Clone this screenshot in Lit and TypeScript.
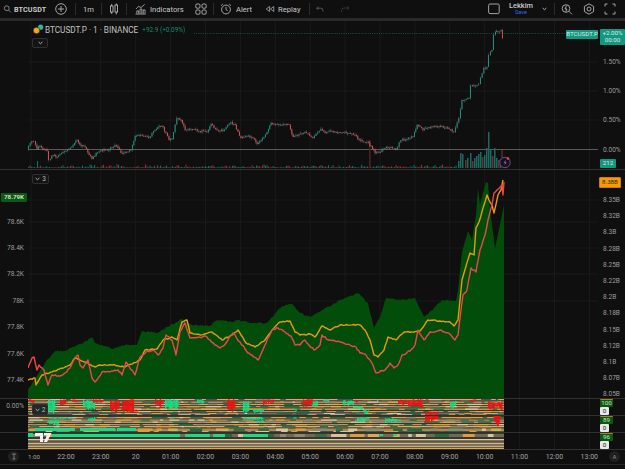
import { LitElement, css, html, svg } from "lit";
import { customElement } from "lit/decorators.js";

type Pt = [number, number];

const rng = (seed: number) => () => {
  seed = (seed * 1664525 + 1013904223) >>> 0;
  return seed / 4294967296;
};

const PRICE: Pt[] = [
  [28,149],[33,141],[35,141],[38,149],[41,146],[45,149],[48,151],[50,160],[54,155],[58,157],[64,152],[70,149],[74,145],[78,140],[82,146],[86,147],[90,155],[93,159],[97,153],[102,150],[110,150],[116,145],[119,148],[122,153],[126,152],[132,150],[136,136],[140,135],[145,136],[150,138],[156,130],[160,126],[164,127],[170,140],[173,139],[178,118],[182,120],[186,130],[192,129],[200,131],[208,132],[212,124],[218,130],[224,131],[232,122],[236,125],[242,138],[248,136],[254,138],[258,144],[262,140],[268,132],[272,123],[280,125],[290,125],[294,137],[300,134],[306,132],[314,138],[322,129],[326,133],[330,131],[340,132],[350,133],[356,135],[360,140],[368,142],[372,146],[376,153],[380,152],[386,148],[392,147],[397,150],[402,140],[408,139],[414,137],[418,125],[424,130],[430,127],[440,126],[450,129],[455,132],[460,118],[463,100],[470,98],[472,85],[478,85],[480,84],[485,68],[488,67],[490,55],[493,50],[495,35],[496,32],[502,30],[503,38],
];

const AREA: Pt[] = [
  [28,390],[45,363],[55,351],[65,351],[70,348],[83,343],[92,337],[95,343],[113,349],[125,345],[137,345],[142,331],[157,333],[167,327],[182,319],[192,325],[210,326],[217,320],[233,322],[238,320],[250,323],[267,323],[282,306],[292,304],[300,313],[310,317],[322,310],[332,305],[340,300],[358,293],[368,303],[374,328],[380,317],[386,298],[400,300],[415,298],[424,317],[434,308],[442,300],[456,301],[458,290],[462,252],[468,231],[472,240],[476,215],[478,188],[480,205],[486,182],[488,183],[490,210],[495,248],[502,215],[504,205],
];

const ORANGE: Pt[] = [
  [28,380],[35,378],[36,385],[42,375],[55,371],[65,367],[70,365],[75,358],[85,362],[95,367],[100,365],[115,365],[125,367],[140,360],[145,350],[157,349],[163,340],[172,337],[177,340],[182,322],[187,320],[190,333],[200,335],[212,332],[222,340],[232,335],[238,330],[246,343],[255,347],[265,340],[272,330],[280,322],[290,321],[295,332],[300,335],[310,334],[315,337],[322,326],[330,330],[340,325],[360,325],[365,330],[370,340],[374,355],[378,357],[384,350],[388,337],[396,340],[404,332],[414,332],[420,331],[428,320],[440,321],[450,322],[454,326],[458,320],[460,300],[462,280],[464,273],[470,253],[474,255],[476,228],[479,222],[484,205],[487,195],[489,200],[492,205],[494,213],[498,195],[501,190],[503,180],
];

const RED: Pt[] = [
  [28,368],[32,358],[34,357],[37,370],[39,365],[44,370],[48,385],[52,375],[60,376],[65,373],[70,368],[75,358],[78,355],[80,365],[83,368],[88,360],[92,378],[95,382],[102,372],[110,372],[118,370],[122,375],[126,362],[135,375],[140,357],[146,352],[153,350],[158,355],[163,348],[166,335],[172,340],[176,355],[180,332],[185,323],[190,338],[195,338],[205,336],[210,340],[215,345],[220,348],[226,343],[233,333],[240,342],[248,353],[252,355],[258,360],[265,345],[272,330],[278,328],[285,332],[291,336],[295,345],[300,345],[305,340],[314,350],[320,345],[322,335],[328,340],[340,342],[350,345],[356,347],[360,353],[366,355],[370,360],[373,365],[376,373],[385,370],[390,363],[394,368],[398,365],[402,355],[410,351],[415,345],[418,330],[424,340],[428,335],[430,332],[435,332],[440,330],[450,334],[455,340],[458,335],[461,310],[463,295],[467,290],[471,268],[476,272],[480,250],[485,235],[488,220],[492,205],[494,193],[497,190],[502,185],[503,195],[504,182],
];

// [x1, x2, y1, y2] in page pixels
const RED_BLOBS = [
  [29,35,398,402],[60,65,398,405],[72,77,398,401],[93,103,398,402],[110,119,399,411],[122,133,398,412],[133,138,408,411],[155,163,398,407],[227,235,398,411],[263,273,398,404],
  [303,312,398,406],[355,357,398,402],[398,407,398,405],[408,422,398,408],[426,428,398,401],[470,475,398,401],[482,483,398,401],[488,502,400,409],[425,437,410,422],
];
const GREEN_BLOBS = [
  [48,55,398,413],[83,95,399,409],[165,177,398,409],[197,203,398,404],[243,248,400,413],[253,263,407,413],[293,296,407,410],
  [312,317,399,407],[323,328,398,401],[343,353,399,405],[353,362,405,409],[363,368,408,414],[377,378,398,402],[450,455,399,408],
  [48,73,416,418],[48,58,418,426],[88,95,416,421],[170,175,416,418],[243,263,416,419],[257,263,419,422],[293,296,416,418],
  [357,368,416,421],[385,400,417,422],
];
// long flat bars stay solid
const GREEN_BARS = [
  [35,75,427,430],[80,115,427,430],[117,136,427,430],
  [28,33,432,436],[52,163,433,436],[163,180,433,436],[185,210,433,436],[213,225,433,436],[243,268,433,436],[380,383,433,435],[393,397,433,435],
];
const BIG_VOL: [number, number, boolean][] = [
  [458,161,true],[460,153,true],[462,154,true],[465,160,false],[467,158,true],[470,153,true],[472,161,false],[474,158,true],[476,156,true],[478,154,true],[480,152,true],[482,157,false],[484,155,true],[486,148,true],[488,132,true],[490,150,true],[492,156,false],[494,148,true],[496,158,true],[498,160,false],[500,159,true],
];

function densify(pts: Pt[], step: number, jitter: number, seed: number): Pt[] {
  const r = rng(seed);
  const out: Pt[] = [];
  for (let i = 0; i < pts.length - 1; i++) {
    const [x0, y0] = pts[i];
    const [x1, y1] = pts[i + 1];
    const n = Math.max(1, Math.round((x1 - x0) / step));
    for (let k = 0; k < n; k++) {
      const t = k / n;
      out.push([x0 + (x1 - x0) * t, y0 + (y1 - y0) * t + (k ? (r() - 0.5) * jitter : 0)]);
    }
  }
  out.push(pts[pts.length - 1]);
  return out;
}

const toLine = (pts: Pt[]) => pts.map(([x, y]) => `${x.toFixed(1)},${y.toFixed(1)}`).join(" ");

const vgrid = () => {
  const out = [];
  for (let x = 31; x < 598; x += 34.9) {
    out.push(svg`<line x1=${x} x2=${x} y1="0" y2="470" stroke="#1a1a1a" stroke-width="1"></line>`);
  }
  return out;
};

const hgrid = (ys: number[]) =>
  ys.map((y) => svg`<line x1="28" x2="598" y1=${y} y2=${y} stroke="#1a1a1a" stroke-width="1"></line>`);

function candles() {
  const r = rng(7);
  const pts = densify(PRICE, 1.5, 2.2, 11);
  const out = [];
  for (let i = 0; i < pts.length - 1; i++) {
    const [x, y0] = pts[i];
    const y1 = pts[i + 1][1];
    const up = y1 < y0;
    const c = up ? "#17917f" : "#e0484d";
    const top = Math.min(y0, y1);
    const h = Math.max(0.8, Math.abs(y1 - y0));
    out.push(svg`<line x1=${x + 0.4} x2=${x + 0.4} y1=${top - r() * 1.8} y2=${top + h + r() * 1.8} stroke="#8a8a8a" stroke-width="0.4"></line>
      <rect x=${x} y=${top} width="1" height=${h} fill=${c}></rect>`);
  }
  return out;
}

function volumes() {
  const r = rng(23);
  const out = [];
  for (let x = 28; x < 457; x += 1.5) {
    const up = r() > 0.48;
    let h = 0.6 + r() * r() * 3.4;
    if (x > 32 && x < 40 && r() > 0.7) h = 7;
    out.push(svg`<rect x=${x} y=${168 - h} width="1.1" height=${h} fill=${up ? "#0f6f62" : "#8a2f33"}></rect>`);
  }
  for (const [x, top, up] of BIG_VOL) {
    out.push(svg`<rect x=${x} y=${top} width="1.5" height=${168 - top} fill=${up ? "#1b6a62" : "#6e3235"}></rect>`);
  }
  out.push(svg`<rect x="369" y="140" width="1.6" height="28" fill="#4a2224"></rect>`);
  return out;
}

function stripes() {
  const r = rng(41);
  const out = [];
  out.push(svg`<rect x="28" y="398" width="476" height="51" fill="#383631"></rect>`);
  const rows: [number, number, string][] = [
    [398, 1.2, "#d2ad73"], [400.5, 1.3, "#c9a565"], [402.8, 1.3, "#d8a34e"], [405, 1.3, "#b49a5f"], [407.5, 1.4, "#cfa45c"], [410, 1.2, "#b39a63"], [412, 1, "#6d6d6d"], [413.2, 1.8, "#505050"],
    [416, 1.3, "#d8a34e"], [418.5, 1.3, "#b49a5f"], [420.5, 1.3, "#d2ad73"], [423, 1.3, "#b49a5f"], [425, 1.3, "#d2ad73"], [427.5, 2.5, "#a58a55"], [430, 1.5, "#4a4a4a"],
    [433, 3, "#6f6a55"], [438, 1.4, "#d8c8a6"], [440.5, 1.2, "#8a7a55"], [442, 1.4, "#d2b98c"], [444.5, 1.4, "#d7b987"], [446.7, 1.6, "#e0a64d"],
  ];
  for (const [y, h, c] of rows) {
    out.push(svg`<rect x="28" y=${y} width="476" height=${h} fill=${c}></rect>`);
  }
  const alt = ["#e09c34", "#d8c39a", "#216a3b", "#2f6f44", "#8b8b6b", "#e0a84e"];
  for (const [y, h] of rows) {
    if (y > 436) continue;
    let x = 28 + r() * 6;
    while (x < 500) {
      const w = Math.min(2 + r() * 14, 504 - x);
      out.push(svg`<rect x=${x} y=${y} width=${w} height=${h} fill=${alt[Math.floor(r() * alt.length)]}></rect>`);
      x += w + 3 + r() * 12;
    }
  }
  const blob = ([x1, x2, y1, y2]: number[], fill: string) => {
    for (let x = x1; x < x2; x += 1.2) {
      const t = y1 + r() * Math.min(2.4, (y2 - y1) * 0.35);
      const b = y2 - r() * Math.min(4, (y2 - y1) * 0.5);
      out.push(svg`<rect x=${x} y=${t} width="1.3" height=${b - t} fill=${fill}></rect>`);
    }
  };
  for (const b of GREEN_BLOBS) blob(b, "#12dd82");
  for (const b of RED_BLOBS) blob(b, "#ee1212");
  for (const [x1, x2, y1, y2] of GREEN_BARS) {
    out.push(svg`<rect x=${x1} y=${y1} width=${x2 - x1} height=${y2 - y1} fill="#12dd82"></rect>`);
  }
  out.push(svg`<path d="M493 415h8l-1.5 7-1.5 4-1.5-4-1.5-1z" fill="#ee1212"></path>`);
  out.push(svg`<path d="M35 432h8v9h-3v-6h-5zM44 432h7.5l-4.5 9h-3.2l3.2-6.5h-3z" fill="#f2f2f2"></path>`);
  return out;
}

const ic = (body: unknown, w = 12) =>
  html`<svg class="ic" width=${w} height="12" viewBox="0 0 12 12" fill="none" stroke="currentColor" stroke-width="0.8">${body}</svg>`;

const chevron = html`<svg width="5" height="4" viewBox="0 0 5 4" fill="none" stroke="#c0c0c0" stroke-width="0.9"><path d="M.6 1l1.9 1.7L4.4 1"></path></svg>`;

const TOP_TICKS = [
  { t: "1.50%", y: 41 },
  { t: "1.00%", y: 70 },
  { t: "0.50%", y: 99 },
  { t: "0.00%", y: 128.5 },
];
const LEFT_TICKS = [
  { t: "78.6K", y: 52 },
  { t: "78.4K", y: 78 },
  { t: "78.2K", y: 104 },
  { t: "78K", y: 131 },
  { t: "77.8K", y: 157 },
  { t: "77.6K", y: 184 },
  { t: "77.4K", y: 210 },
];
const RIGHT_TICKS = ["8.35B", "8.32B", "8.3B", "8.28B", "8.25B", "8.22B", "8.2B", "8.18B", "8.15B", "8.12B", "8.1B", "8.07B", "8.05B"].map(
  (t, i) => ({ t, y: 30 + i * 16.2 })
);
const TIMES = ["22:00", "23:00", "20", "01:00", "02:00", "03:00", "04:00", "05:00", "06:00", "07:00", "08:00", "09:00", "10:00", "11:00", "12:00", "13:00"];

@customElement("app-root")
export class AppRoot extends LitElement {
  static styles = css`
    :host {
      display: block;
      width: 625px;
      height: 469px;
      overflow: hidden;
      background: #0f0f0f;
      color: #c4c4c4;
      font-family: Roboto, "Liberation Sans", sans-serif;
      font-size: 7px;
    }
    .toolbar {
      display: flex;
      align-items: center;
      height: 18px;
      font-size: 7.6px;
      color: #c8c8c8;
    }
    .ic { display: block; flex: none; }
    .sep { width: 1px; height: 12px; background: #2c2c2c; flex: none; }
    .sym { font-weight: 700; margin-left: 2px; width: 39px; font-size: 7.2px; letter-spacing: 0.1px; }
    .right { margin-left: auto; display: flex; align-items: center; }
    .user { display: flex; flex-direction: column; align-items: center; width: 30px; line-height: 7px; margin-left: 6px; }
    .user b { font-weight: 500; font-size: 7.4px; }
    .user span { color: #2f66ee; font-size: 5.6px; }
    .divider { height: 3px; background: #2a2a2a; }

    .pane {
      display: grid;
      grid-template-columns: 28px 570px 27px;
      border-bottom: 1px solid #303030;
    }
    .top { height: 148px; }
    .main { height: 228px; }
    .strip { height: 16px; }
    .cell { position: relative; overflow: hidden; }
    .cell svg.plot { display: block; width: 570px; height: 100%; }
    .axis { position: relative; overflow: visible; }
    .tick {
      position: absolute;
      transform: translateY(-50%);
      color: #9c9c9c;
      font-size: 6.6px;
      line-height: 8px;
      white-space: nowrap;
    }
    .axis.l .tick { right: 4px; }
    .axis.r .tick { left: 5px; }

    .fold {
      position: absolute;
      display: flex;
      align-items: center;
      justify-content: center;
      gap: 2px;
      left: 4px;
      height: 10px;
      box-sizing: border-box;
      border: 1px solid #303030;
      border-radius: 2px;
      background: #141414;
      color: #b8b8b8;
      font-size: 6.6px;
    }
    .legend {
      position: absolute;
      left: 4px;
      top: 3px;
      display: flex;
      align-items: center;
      height: 11px;
      white-space: nowrap;
    }
    .legend .name { font-size: 8.2px; color: #c2c2c2; margin-left: 1px; }
    .legend .chg { font-size: 6.4px; color: #0f8c6c; margin-left: 4px; }
    .tag {
      position: absolute;
      box-sizing: border-box;
      display: flex;
      align-items: center;
      justify-content: center;
      border-radius: 1px;
      font-size: 6.2px;
      line-height: 7px;
      white-space: nowrap;
    }
    .teal { background: #14967f; color: #d6efe9; }
    .sym-tag { right: 0; top: 9px; width: 32px; height: 9px; }
    .pct-tag { left: 2px; top: 8px; width: 25px; height: 16px; flex-direction: column; }
    .vol-tag { left: 2px; top: 138px; width: 16px; height: 9px; }
    .orange-tag { left: 1px; top: 7px; width: 22px; height: 11px; background: #f59a0b; color: #3a2500; border: 1px solid #c97f00; }
    .green-tag { left: 1px; top: 23px; width: 26px; height: 9px; background: #0b5a14; color: #d0dccf; font-weight: 700; }
    .ind { left: 2px; top: 0; width: 13px; height: 8px; background: #0b5a14; color: #d2e2d0; border-top: 1px solid #a8841f; }
    .zero { left: 2px; top: 8px; width: 9px; height: 8px; background: #e8e8e8; color: #222; }

    .times {
      display: grid;
      grid-template-columns: 28px 570px 27px;
      height: 14px;
      border-bottom: 1px solid #262626;
    }
    .times .cell { display: flex; align-items: center; }
    .times .row { display: flex; }
    .times .row span { flex: none; width: 34.9px; text-align: center; color: #a4a4a4; font-size: 7px; }
    .times .row span.first { width: 20.5px; text-align: left; font-size: 6.2px; }
    .round {
      width: 11px;
      height: 11px;
      border-radius: 50%;
      background: #202020;
      color: #8c8c8c;
      display: flex;
      align-items: center;
      justify-content: center;
      font-size: 6px;
      margin: 1px auto 0 8px;
    }
    .times .round.a { margin-left: 11px; }
  `;

  private toolbar() {
    return html`<div class="toolbar">
      <span style="width:3px"></span>
      ${ic(svg`<circle cx="5" cy="5" r="3.2"></circle><path d="M7.5 7.5l3 3"></path>`, 9)}
      <span class="sym">BTCUSDT</span>
      <span style="width:2px"></span>
      ${ic(svg`<circle cx="6" cy="6" r="5.3"></circle><path d="M6 3v6M3 6h6"></path>`)}
      <span style="width:8px"></span><span class="sep"></span>
      <span style="width:7px"></span><span style="width:18px">1m</span>
      <span class="sep"></span><span style="width:6px"></span>
      ${ic(svg`<rect x="2.4" y="3" width="2.6" height="6"></rect><rect x="7" y="2" width="2.6" height="7"></rect><path d="M3.7 1v2M3.7 9v2M8.3 .5V2M8.3 9v2.5"></path>`)}
      <span style="width:6px"></span><span class="sep"></span><span style="width:8px"></span>
      ${ic(svg`<path d="M.5 11.5h11M2 11V8h2v3M5.5 11V6h2v5M9 11V7h2v4M1 6l3-3 2.5 1.5L10.5 1"></path>`, 11)}
      <span style="width:4px"></span><span style="width:45px">Indicators</span>
      ${ic(svg`<rect x=".8" y="1" width="4.2" height="4.2" rx="1.2"></rect><rect x="7" y="1" width="4.2" height="4.2" rx="1.2"></rect><rect x=".8" y="7" width="4.2" height="4.2" rx="1.2"></rect><rect x="7" y="7" width="4.2" height="4.2" rx="1.2"></rect>`)}
      <span style="width:6px"></span><span class="sep"></span><span style="width:6px"></span>
      ${ic(svg`<circle cx="6" cy="6.5" r="4.4"></circle><path d="M6 4v2.6l1.6 1M1 2.6L2.8 1M11 2.6L9.2 1"></path>`)}
      <span style="width:4px"></span><span style="width:29px">Alert</span>
      ${ic(svg`<path d="M5.5 3L1.5 6l4 3zM10.5 3l-4 3 4 3z"></path>`, 10)}
      <span style="width:3px"></span><span style="width:31px">Replay</span>
      <span class="sep"></span><span style="width:5px"></span>
      ${ic(svg`<path d="M2 5h5a2.5 2.5 0 0 1 2.5 2.5V9M4 3L2 5l2 2" stroke="#777"></path>`, 10)}
      <span style="width:14px"></span>
      ${ic(svg`<path d="M10 5H5a2.5 2.5 0 0 0-2.5 2.5V9M8 3l2 2-2 2" stroke="#3e3e3e"></path>`, 12)}
      <div class="right">
        ${ic(svg`<rect x=".6" y="1" width="10.6" height="9.6" rx="1.4"></rect>`, 12)}
        <div class="user"><b>Lekkim</b><span>Save</span></div>
        <span style="width:6px"></span>
        ${chevron}
        <span style="width:7px"></span><span class="sep"></span><span style="width:6px"></span>
        ${ic(svg`<circle cx="5" cy="5.5" r="3.8"></circle><path d="M8 8.3l3 3M5.6 2.6L4 6h2l-1.2 2.6"></path>`)}
        <span style="width:10px"></span>
        ${ic(svg`<path d="M6 .8l4.6 2.6v5.2L6 11.2 1.4 8.6V3.4z"></path><circle cx="6" cy="6" r="2"></circle>`)}
        <span style="width:9px"></span>
        ${ic(svg`<path d="M1 3.5V1h2.5M8.5 1H11v2.5M11 8.5V11H8.5M3.5 11H1V8.5"></path>`)}
        <span style="width:9px"></span>
      </div>
    </div>`;
  }

  private topPane() {
    return html`<div class="pane top">
      <div></div>
      <div class="cell">
        <svg class="plot" viewBox="28 21 570 148">
          ${vgrid()}
          ${hgrid([62, 91, 120])}
          <line x1="194" x2="598" y1="33.5" y2="33.5" stroke="#1c6f5c" stroke-width="0.7" stroke-dasharray="1 1.2"></line>
          <line x1="28" x2="598" y1="149.5" y2="149.5" stroke="#6e6e6e" stroke-width="0.8"></line>
          ${volumes()}
          ${candles()}
          <line x1="502" x2="502" y1="149" y2="158" stroke="#a33a3f" stroke-width="0.8"></line>
          <circle cx="505" cy="162.5" r="5.2" fill="#151217" stroke="#6a4a8e" stroke-width="1"></circle>
          <path d="M505.9 159.6l-2.4 3.4h1.6l-.8 2.6 2.5-3.4h-1.6z" fill="#8a5cb8"></path>
          <circle cx="508" cy="158.5" r="1.3" fill="#ef4a4a"></circle>
        </svg>
        <div class="legend">
          <svg width="12" height="11" viewBox="0 0 12 11"><circle cx="8.6" cy="3.2" r="2.6" fill="#2bb6a0"></circle><circle cx="4.5" cy="6.5" r="3.3" fill="#f7a416" stroke="#0f0f0f" stroke-width="0.6"></circle></svg>
          <span class="name">BTCUSDT.P · 1 · BINANCE</span>
          <span class="chg">+92.9 (+0.09%)</span>
        </div>
        <div class="fold" style="top:17px;width:16px">${chevron}</div>
        <div class="tag teal sym-tag">BTCUSDT.P</div>
      </div>
      <div class="axis r">
        <div class="tag teal pct-tag"><span>+2.00%</span><span>00:00</span></div>
        ${TOP_TICKS.map((k) => html`<span class="tick" style="top:${k.y}px">${k.t}</span>`)}
        <div class="tag teal vol-tag">212</div>
      </div>
    </div>`;
  }

  private mainPane() {
    const area = [[28, 398] as Pt, ...densify(AREA, 1.5, 1.6, 5), [504, 398] as Pt];
    return html`<div class="pane main">
      <div class="axis l">
        <div class="tag green-tag">78.79K</div>
        ${LEFT_TICKS.map((k) => html`<span class="tick" style="top:${k.y}px">${k.t}</span>`)}
      </div>
      <div class="cell">
        <svg class="plot" viewBox="28 170 570 228">
          ${vgrid()}
          ${hgrid([200, 222, 248, 274, 301])}
          <polygon points=${toLine(area)} fill="#034d0a"></polygon>
          <polyline points=${toLine(densify(ORANGE, 1.5, 1.1, 9))} fill="none" stroke="#e8990f" stroke-width="1.4" stroke-linejoin="round"></polyline>
          <polyline points=${toLine(densify(RED, 1.5, 1.8, 3))} fill="none" stroke="#ec4650" stroke-width="1.4" stroke-linejoin="round"></polyline>
        </svg>
        <div class="fold" style="top:4px;width:17px">${chevron}<span>3</span></div>
      </div>
      <div class="axis r">
        <div class="tag orange-tag">8.38B</div>
        ${RIGHT_TICKS.map((k) => html`<span class="tick" style="top:${k.y}px">${k.t}</span>`)}
      </div>
    </div>`;
  }

  private stripPane(y: number, value: string, pct: boolean) {
    return html`<div class="pane strip">
      <div class="axis l">${pct ? html`<span class="tick" style="top:7px">0.00%</span>` : ""}</div>
      <div class="cell">
        <svg class="plot" viewBox="28 ${y} 570 16">${vgrid()}${stripes()}</svg>
        ${pct ? html`<div class="fold" style="top:5px;width:16px;height:11px;background:#1d2a28">${chevron}<span>2</span></div>` : ""}
      </div>
      <div class="axis r">
        <div class="tag ind">${value}</div>
        <div class="tag zero">0</div>
      </div>
    </div>`;
  }

  render() {
    return html`
      ${this.toolbar()}
      <div class="divider"></div>
      ${this.topPane()}
      ${this.mainPane()}
      ${this.stripPane(398, "100", true)}
      ${this.stripPane(415, "89", false)}
      ${this.stripPane(432, "96", false)}
      <div class="times">
        <div>
          <div class="round">
            <svg width="6" height="7" viewBox="0 0 6 7" fill="none" stroke="#8c8c8c" stroke-width="0.8"><path d="M1 1h4M3 1v5M1.5 6h3"></path></svg>
          </div>
        </div>
        <div class="cell">
          <div class="row">
            <span class="first">1:00</span>
            ${TIMES.map((t) => html`<span>${t}</span>`)}
          </div>
        </div>
        <div><div class="round a">A</div></div>
      </div>
    `;
  }
}
